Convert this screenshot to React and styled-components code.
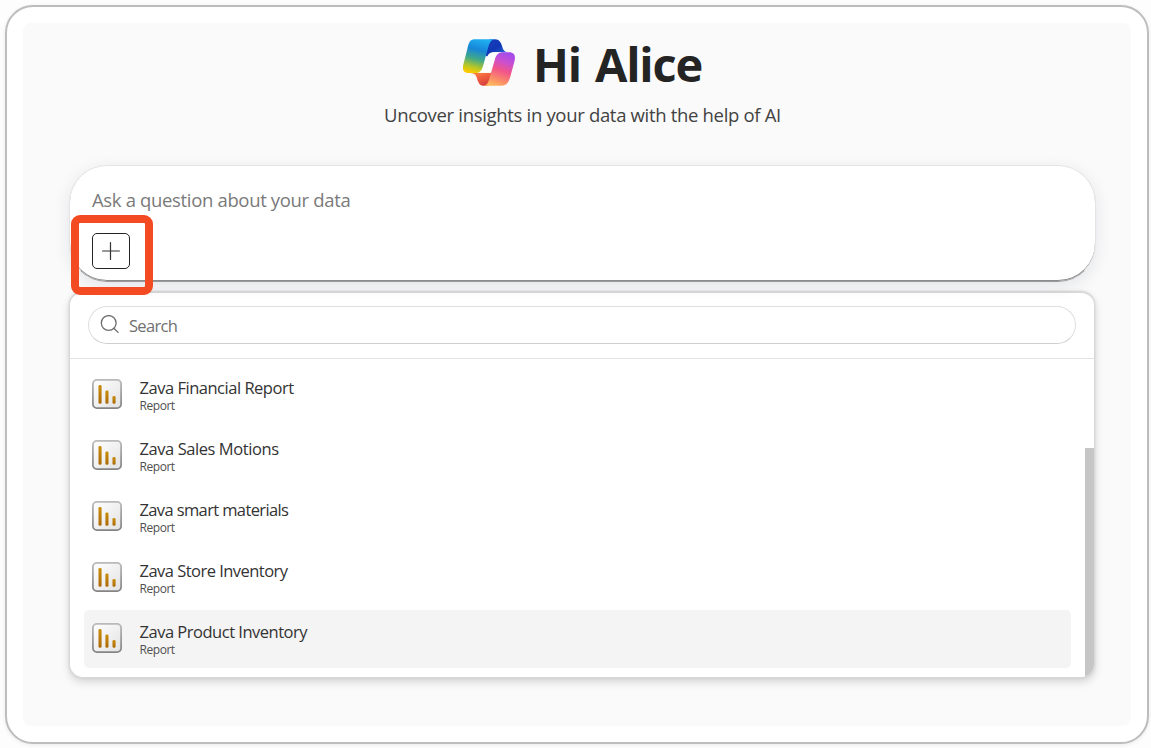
import React from 'react';
import styled, { createGlobalStyle } from 'styled-components';

const GlobalStyle = createGlobalStyle`
  *, *::before, *::after { box-sizing: border-box; }
  body {
    margin: 0;
    background: #fdfdfd;
    color: #242424;
    font-family: 'Open Sans', 'Noto Sans', sans-serif;
    overflow: hidden;
  }
`;

const Page = styled.div`
  width: 1151px;
  height: 748px;
  padding: 5px 2px 4px 5px;
`;

const Frame = styled.div`
  height: 739px;
  border: 2px solid #bdbdbd;
  border-radius: 28px;
  background: #fff;
  padding: 16px;
  box-shadow: 0 1px 4px rgba(0, 0, 0, 0.08);
`;

const Surface = styled.main`
  height: 703px;
  border-radius: 8px;
  background: #fafafa;
  padding: 14px 35px 0 46px;
`;

const Header = styled.header`
  display: flex;
  flex-direction: column;
  align-items: center;
  height: 128px;
`;

const Greeting = styled.div`
  display: flex;
  gap: 18px;
  height: 54px;
`;

const Title = styled.h1`
  margin: 0;
  font-size: 47px;
  line-height: 54px;
  font-weight: 700;
  letter-spacing: -1.2px;
  word-spacing: 3px;
  white-space: nowrap;
`;

const Subtitle = styled.p`
  margin: 11px 0 0;
  font-size: 18.5px;
  line-height: 26px;
  letter-spacing: -0.32px;
  color: #424242;
  white-space: nowrap;
`;

const Prompt = styled.section`
  position: relative;
  height: 117px;
  border: 1px solid #e4e4e4;
  border-bottom-color: #9a9a9a;
  border-radius: 38px;
  background: #fff;
  padding: 21px 22px;
  box-shadow: inset 0 -1px 0 #8c8c8c, 0 4px 16px rgba(30, 40, 80, 0.1);
`;

const Placeholder = styled.div`
  font-size: 18.5px;
  line-height: 26px;
  letter-spacing: -0.34px;
  color: #7a7a7a;
  white-space: nowrap;
`;

const AddButton = styled.button`
  display: grid;
  place-items: center;
  width: 38px;
  height: 36px;
  margin-top: 20px;
  padding: 0;
  border: 1.5px solid #242424;
  border-radius: 5px;
  background: #fff;
`;

const Highlight = styled.div`
  position: absolute;
  left: 1px;
  top: 49px;
  width: 82px;
  height: 80px;
  border: 8px solid #f44a22;
  border-radius: 9px;
  z-index: 2;
`;

const Panel = styled.section`
  height: 387px;
  margin: 9px 1px 0 0;
  border: 1px solid #d9d9d9;
  border-top-width: 2px;
  border-radius: 14px;
  background: #fff;
  overflow: hidden;
  box-shadow: 0 4px 9px rgba(0, 0, 0, 0.15), 0 0 3px rgba(0, 0, 0, 0.1);
`;

const SearchArea = styled.div`
  height: 66px;
  padding: 13px 18px;
  border-bottom: 1px solid #e2e2e2;
`;

const SearchField = styled.div`
  display: flex;
  align-items: center;
  gap: 9px;
  height: 38px;
  padding-left: 11px;
  border: 1px solid #dedede;
  border-bottom-color: #cfcfcf;
  border-radius: 19px;
  font-size: 16.5px;
  letter-spacing: -0.7px;
  color: #707070;
`;

const Results = styled.div`
  display: flex;
  justify-content: space-between;
  height: 318px;
`;

const List = styled.ul`
  list-style: none;
  width: 987px;
  margin: 0 0 0 14px;
  padding: 7px 0 0;
  display: flex;
  flex-direction: column;
  gap: 3px;
`;

const Item = styled.li`
  display: flex;
  align-items: flex-start;
  gap: 17.5px;
  height: 58px;
  padding: 13px 8px 0;
  border-radius: 5px;
  background: ${({ $active }) => ($active ? '#f4f4f4' : 'transparent')};
`;

const ItemText = styled.div`
  margin-top: -2px;
`;

const ItemName = styled.div`
  font-size: 16.5px;
  line-height: 22px;
  letter-spacing: ${({ $spacing }) => $spacing}px;
  color: #333;
  white-space: nowrap;
`;

const ItemKind = styled.div`
  font-size: 12px;
  line-height: 14px;
  letter-spacing: -0.45px;
  color: #505050;
`;

const Scrollbar = styled.div`
  width: 9px;
  height: 231px;
  margin-top: 89px;
  background: #c6c6c6;
`;

const LogoMark = styled.svg`
  flex: none;
  margin-top: 2px;
`;

const Logo = () => (
  <LogoMark width="52" height="47" viewBox="24 26 156 142" preserveAspectRatio="none">
    <defs>
      <linearGradient id="blue" x1="0.6" y1="0" x2="0.35" y2="1">
        <stop offset="0" stopColor="#1fb0f1" />
        <stop offset="0.32" stopColor="#1786d8" />
        <stop offset="0.6" stopColor="#42a987" />
        <stop offset="0.84" stopColor="#b8c725" />
        <stop offset="1" stopColor="#fbc900" />
      </linearGradient>
      <linearGradient id="navy" x1="0" y1="0" x2="1" y2="1">
        <stop offset="0" stopColor="#183fbd" />
        <stop offset="0.5" stopColor="#1237b4" />
        <stop offset="1" stopColor="#2b78e4" />
      </linearGradient>
      <linearGradient id="pink" x1="0.7" y1="0" x2="0.35" y2="1">
        <stop offset="0" stopColor="#a24cec" />
        <stop offset="0.25" stopColor="#c84fd2" />
        <stop offset="0.52" stopColor="#f2558a" />
        <stop offset="0.78" stopColor="#fa876a" />
        <stop offset="1" stopColor="#ffb65c" />
      </linearGradient>
      <linearGradient id="orange" x1="0" y1="0" x2="0.7" y2="1">
        <stop offset="0" stopColor="#ff943d" />
        <stop offset="0.5" stopColor="#f0603f" />
        <stop offset="1" stopColor="#d63d3d" />
      </linearGradient>
    </defs>
    <path d="M104 27H120C133 27 138 37 142 50C145 61 150 66 162 66H118C106 66 101 70 97 80L85 70Z" fill="url(#navy)" />
    <path d="M40 128H112L98 167H86C75 167 70 159 66 145C63 134 58 129 40 128Z" fill="url(#orange)" />
    <path d="M97 80C101 70 107 67 118 66H145L112 116L106 128H66L86 84Z" fill="#fff" />
    <path d="M58 27H122C109 27 104 36 100 50L84 108C79 123 73 129 60 129H40C25 129 21 118 25 103L37 56C41 38 45 27 58 27Z" fill="url(#blue)" />
    <path d="M145 66H162C178 66 182 77 179 91L166 140C161 157 155 167 141 167H83C96 167 100 157 103 145L119 90C123 74 130 66 145 66Z" fill="url(#pink)" />
  </LogoMark>
);

const ReportIcon = () => (
  <svg width="30" height="30" viewBox="0 0 30 30">
    <defs>
      <linearGradient id="edge" x1="0" y1="0" x2="0" y2="1">
        <stop offset="0" stopColor="#bababa" />
        <stop offset="1" stopColor="#858585" />
      </linearGradient>
      <linearGradient id="face" x1="0" y1="0" x2="1" y2="1">
        <stop offset="0" stopColor="#fff" />
        <stop offset="1" stopColor="#e2e2e2" />
      </linearGradient>
      <linearGradient id="bar" x1="0" y1="0" x2="0" y2="1">
        <stop offset="0" stopColor="#c98e0c" />
        <stop offset="1" stopColor="#ad6a08" />
      </linearGradient>
    </defs>
    <rect x="0.9" y="0.9" width="28.2" height="28.2" rx="4" fill="url(#face)" stroke="url(#edge)" strokeWidth="1.8" />
    <rect x="6.5" y="6" width="3.1" height="18.7" rx="1.3" fill="url(#bar)" />
    <rect x="13.4" y="11.5" width="3.1" height="13.2" rx="1.3" fill="url(#bar)" />
    <rect x="20.5" y="17" width="3.1" height="7.7" rx="1.3" fill="url(#bar)" />
  </svg>
);

const SearchIcon = () => (
  <svg width="20" height="20" viewBox="0 0 20 20" fill="none" stroke="#6c6c6c" strokeWidth="1.3" strokeLinecap="round">
    <circle cx="8.7" cy="8" r="7.4" />
    <path d="M13.9 13.2L18.1 17.4" />
  </svg>
);

const PlusIcon = () => (
  <svg width="18" height="18" viewBox="0 0 18 18" stroke="#333" strokeWidth="1.2" strokeLinecap="round">
    <path d="M8.5 0.6V17.4M0.6 9H17.4" />
  </svg>
);

const reports = [
  { name: 'Zava Financial Report', spacing: -0.48 },
  { name: 'Zava Sales Motions', spacing: -0.43 },
  { name: 'Zava smart materials', spacing: -0.62 },
  { name: 'Zava Store Inventory', spacing: -0.53 },
  { name: 'Zava Product Inventory', spacing: -0.49, active: true },
];

export default function App() {
  return (
    <Page>
      <GlobalStyle />
      <Frame>
        <Surface>
          <Header>
            <Greeting>
              <Logo />
              <Title>Hi Alice</Title>
            </Greeting>
            <Subtitle>Uncover insights in your data with the help of AI</Subtitle>
          </Header>
          <Prompt>
            <Placeholder>Ask a question about your data</Placeholder>
            <AddButton aria-label="Add">
              <PlusIcon />
            </AddButton>
            <Highlight />
          </Prompt>
          <Panel>
            <SearchArea>
              <SearchField>
                <SearchIcon />
                <span>Search</span>
              </SearchField>
            </SearchArea>
            <Results>
              <List>
                {reports.map((r) => (
                  <Item key={r.name} $active={r.active}>
                    <ReportIcon />
                    <ItemText>
                      <ItemName $spacing={r.spacing}>{r.name}</ItemName>
                      <ItemKind>Report</ItemKind>
                    </ItemText>
                  </Item>
                ))}
              </List>
              <Scrollbar />
            </Results>
          </Panel>
        </Surface>
      </Frame>
    </Page>
  );
}
